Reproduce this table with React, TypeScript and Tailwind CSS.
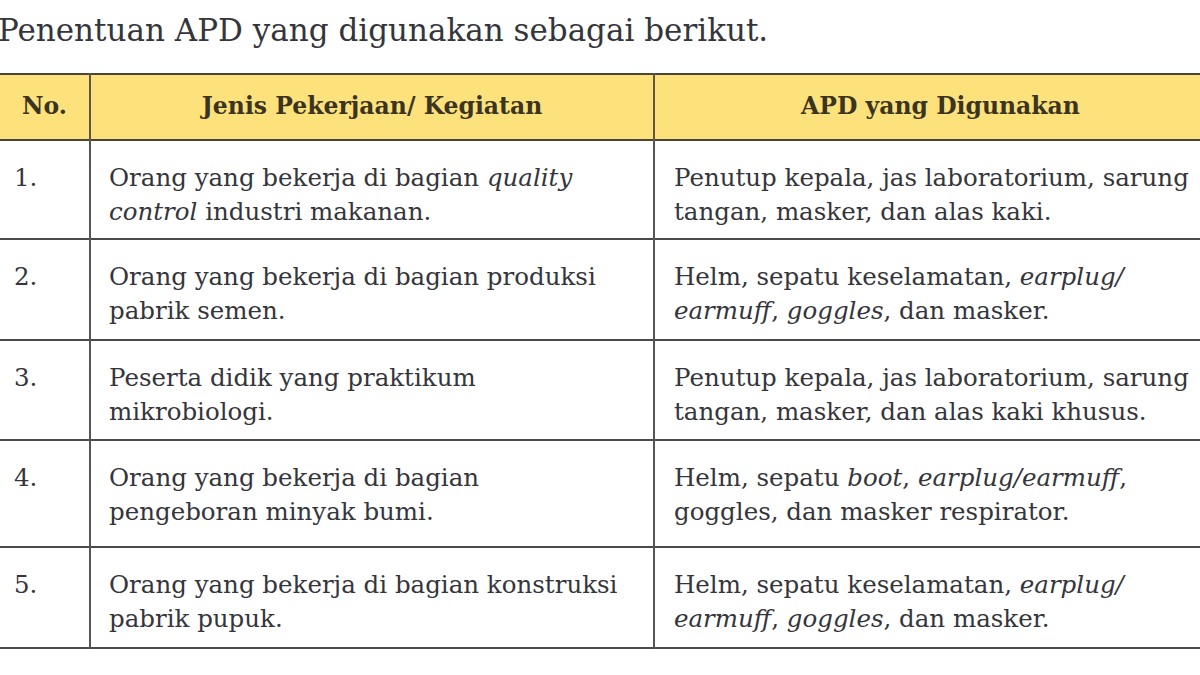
import React from 'react';

type Row = {
  no: string;
  job: React.ReactNode;
  apd: React.ReactNode;
  h: string;
};

const rows: Row[] = [
  {
    no: '1.',
    job: (
      <>
        Orang yang bekerja di bagian <i>quality</i>
        <br />
        <i>control</i> industri makanan.
      </>
    ),
    apd: (
      <>
        Penutup kepala, jas laboratorium, sarung
        <br />
        tangan, masker, dan alas kaki.
      </>
    ),
    h: 'h-[99px]',
  },
  {
    no: '2.',
    job: (
      <>
        Orang yang bekerja di bagian produksi
        <br />
        pabrik semen.
      </>
    ),
    apd: (
      <>
        Helm, sepatu keselamatan, <i>earplug/</i>
        <br />
        <i>earmuff</i>, <i>goggles</i>, dan masker.
      </>
    ),
    h: 'h-[101px]',
  },
  {
    no: '3.',
    job: (
      <>
        Peserta didik yang praktikum
        <br />
        mikrobiologi.
      </>
    ),
    apd: (
      <>
        Penutup kepala, jas laboratorium, sarung
        <br />
        tangan, masker, dan alas kaki khusus.
      </>
    ),
    h: 'h-[100px]',
  },
  {
    no: '4.',
    job: (
      <>
        Orang yang bekerja di bagian
        <br />
        pengeboran minyak bumi.
      </>
    ),
    apd: (
      <>
        Helm, sepatu <i>boot</i>, <i>earplug/earmuff</i>,
        <br />
        goggles, dan masker respirator.
      </>
    ),
    h: 'h-[107px]',
  },
  {
    no: '5.',
    job: (
      <>
        Orang yang bekerja di bagian konstruksi
        <br />
        pabrik pupuk.
      </>
    ),
    apd: (
      <>
        Helm, sepatu keselamatan, <i>earplug/</i>
        <br />
        <i>earmuff</i>, <i>goggles</i>, dan masker.
      </>
    ),
    h: 'h-[101px]',
  },
];

export default function App() {
  return (
    <div className="w-[1200px] h-[675px] overflow-hidden bg-white font-['DejaVu_Serif',serif] text-[#35353c]">
      {/* Caption */}
      <p className="pt-[11px] -ml-[2px] text-[31px] leading-[38px] whitespace-nowrap">
        Penentuan APD yang digunakan sebagai berikut.
      </p>

      <table className="mt-[24px] w-[1226px] table-fixed border-collapse">
        <colgroup>
          <col className="w-[90px]" />
          <col className="w-[564px]" />
          <col className="w-[572px]" />
        </colgroup>
        <thead>
          <tr className="h-[66px] bg-[#fde27c] border-y-2 border-[#4a4636] text-[#3a3420] text-[23.5px] font-bold">
            <th className="border-r-2 border-[#5a5648] text-center">No.</th>
            <th className="border-r-2 border-[#5a5648] text-center">Jenis Pekerjaan/ Kegiatan</th>
            <th className="text-center">APD yang Digunakan</th>
          </tr>
        </thead>
        <tbody className="text-[24.5px] leading-[34px]">
          {rows.map((r) => (
            <tr key={r.no} className={`${r.h} border-b-2 border-[#4a4a4a]`}>
              <td className="align-top pt-[20px] pl-[14px] border-r-2 border-[#555]">{r.no}</td>
              <td className="align-top pt-[20px] pl-[18px] border-r-2 border-[#555] whitespace-nowrap">{r.job}</td>
              <td className="align-top pt-[20px] pl-[19px] whitespace-nowrap">{r.apd}</td>
            </tr>
          ))}
        </tbody>
      </table>
    </div>
  );
}
